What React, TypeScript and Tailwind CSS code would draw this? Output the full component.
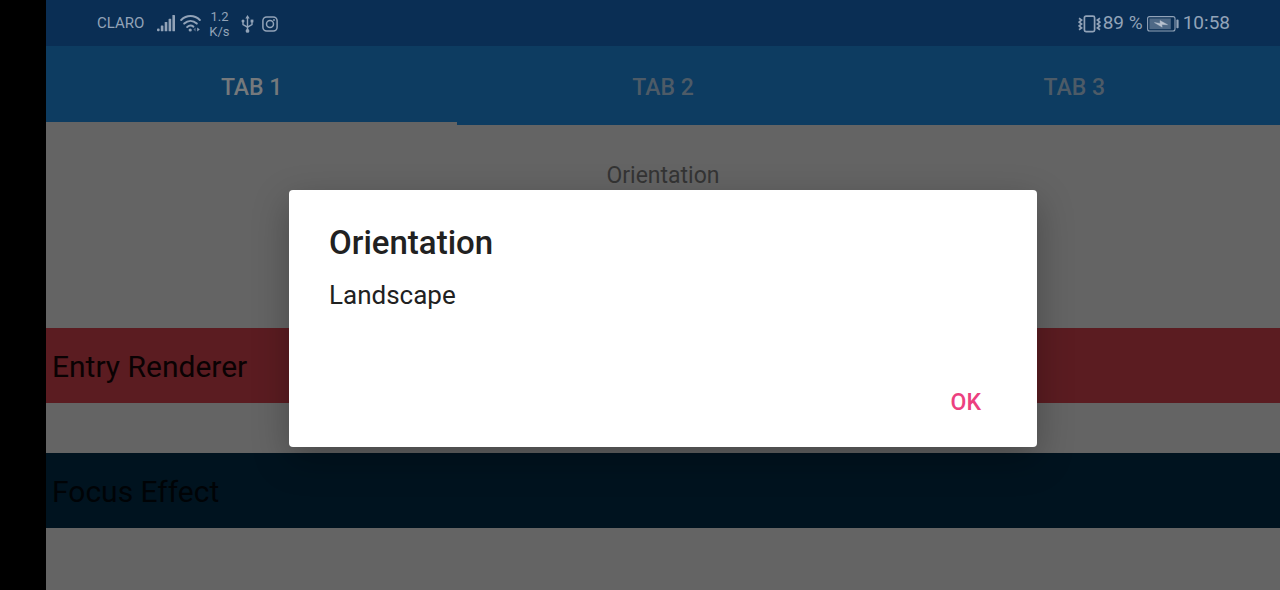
import React, { useState } from "react";

function SignalIcon() {
  return (
    <svg width="18" height="17" viewBox="0 0 18 17" fill="currentColor" aria-hidden="true">
      <rect x="0" y="13.5" width="2.6" height="2.8" rx="1" />
      <rect x="3.8" y="10.5" width="2.6" height="5.8" rx="0.6" />
      <rect x="7.7" y="7" width="2.6" height="9.3" rx="0.6" />
      <rect x="11.6" y="3.8" width="2.6" height="12.5" rx="0.6" />
      <rect x="15.4" y="0" width="2.6" height="16.3" rx="0.6" />
    </svg>
  );
}

function WifiIcon() {
  return (
    <svg width="21" height="17" viewBox="0 0 21 17" fill="none" stroke="currentColor" strokeWidth="2" strokeLinecap="round" aria-hidden="true">
      <path d="M1.2 5C6.6 -0.2 14.4 -0.2 19.8 5" />
      <path d="M4.2 8.6C8 5.1 13 5.1 16.8 8.6" />
      <path d="M7.2 12C9.2 10.3 11.6 10.3 13.4 11.6" />
      <circle cx="10.2" cy="15" r="1.6" fill="currentColor" stroke="none" />
      <path d="M15.6 12.4L13.4 14.4L15.6 16.4Z" fill="currentColor" stroke="none" opacity="0.55" />
      <path d="M17.2 12.4L19.8 14.4L17.2 16.4Z" fill="currentColor" stroke="none" />
    </svg>
  );
}

function UsbIcon() {
  return (
    <svg width="13" height="18" viewBox="0 0 13 18" fill="none" stroke="currentColor" strokeWidth="1.4" aria-hidden="true">
      <path d="M6.5 2.5V15.5" />
      <path d="M2 6.5V9.6L6.5 12.2L11 9.6V6.5" />
      <path d="M6.5 0L8.7 3.4H4.3Z" fill="currentColor" stroke="none" />
      <circle cx="6.5" cy="15.9" r="1.9" fill="currentColor" stroke="none" />
      <circle cx="2" cy="6" r="1.5" fill="currentColor" stroke="none" />
      <rect x="9.6" y="4.6" width="2.8" height="2.8" fill="currentColor" stroke="none" />
    </svg>
  );
}

function CameraIcon() {
  return (
    <svg width="16" height="16" viewBox="0 0 16 16" fill="none" stroke="currentColor" strokeWidth="1.5" aria-hidden="true">
      <rect x="0.9" y="0.9" width="14.2" height="14.2" rx="3.8" />
      <circle cx="8" cy="8" r="3.5" />
      <circle cx="12" cy="4" r="0.9" fill="currentColor" stroke="none" />
    </svg>
  );
}

function VibrateIcon() {
  return (
    <svg width="23" height="18" viewBox="0 0 23 18" fill="none" stroke="currentColor" strokeWidth="1.7" aria-hidden="true">
      <rect x="6.4" y="1.2" width="10.2" height="15.4" rx="1.6" />
      <path d="M1 3.2L3.6 5L1.2 7.1L3.6 9L1.2 10.9L3.6 13L1 14.8" />
      <path d="M22 3.2L19.4 5L21.8 7.1L19.4 9L21.8 10.9L19.4 13L22 14.8" />
    </svg>
  );
}

function BatteryIcon() {
  return (
    <svg width="32" height="16" viewBox="0 0 32 16" aria-hidden="true">
      <rect x="0.6" y="0.6" width="27.4" height="14.4" rx="2" fill="none" stroke="currentColor" strokeWidth="1.1" />
      <rect x="2.4" y="2.4" width="21.4" height="10.8" fill="currentColor" opacity="0.5" />
      <rect x="29.4" y="3.6" width="2.2" height="8.6" rx="0.8" fill="currentColor" />
      <path d="M7.4 6.6L13.2 7.4L13 4.6L20.6 8.7L14.8 8.4L15.2 11.2Z" fill="#b8c2cf" stroke="#b8c2cf" strokeWidth="0.4" />
    </svg>
  );
}

function StatusBar() {
  return (
    <header className="flex h-[46px] items-center bg-[#0a2e54] pt-px pr-[50px] pl-[51px] text-[#92a3b8]">
      <span className="text-[15px]">CLARO</span>
      <div className="ml-[13px] flex items-center gap-[5px]">
        <SignalIcon />
        <WifiIcon />
      </div>
      <div className="ml-2 text-center text-[13px] leading-[15px]">
        <div>1.2</div>
        <div>K/s</div>
      </div>
      <div className="ml-[11px] flex items-center gap-2">
        <UsbIcon />
        <CameraIcon />
      </div>
      <div className="ml-auto flex items-center text-[19px]">
        <VibrateIcon />
        <span className="ml-[2px]">89 %</span>
        <span className="mx-1">
          <BatteryIcon />
        </span>
        <time>10:58</time>
      </div>
    </header>
  );
}

const tabs = ["TAB 1", "TAB 2", "TAB 3"];

function TabBar() {
  const [active, setActive] = useState(0);
  return (
    <nav role="tablist" className="grid h-[79px] grid-cols-3 bg-[#0d3c61]">
      {tabs.map((tab, i) => (
        <button
          key={tab}
          type="button"
          role="tab"
          aria-selected={i === active}
          onClick={() => setActive(i)}
          className={
            i === active
              ? "border-b-3 border-[#646464] pt-2 text-[23px] font-medium text-[#75797c]"
              : "border-b-3 border-transparent pt-2 text-[23px] font-medium text-[#4d5b67]"
          }
        >
          {tab}
        </button>
      ))}
    </nav>
  );
}

export default function App() {
  return (
    <div className="flex min-h-screen bg-black font-[Roboto,sans-serif]">
      <div className="relative ml-[46px] flex flex-1 flex-col bg-[#646464]">
        <StatusBar />
        <TabBar />
        <main className="flex flex-col">
          <p className="pt-[35px] text-center text-[23px] leading-8 text-[#343434]">Orientation</p>
          <div className="mt-[136px] flex flex-col gap-[50px]">
            <input
              aria-label="Entry"
              defaultValue="Entry Renderer"
              className="h-[75px] w-full bg-[#5b1c21] px-1.5 pt-px text-[30px] text-[#0a0203] outline-none"
            />
            <input
              aria-label="Focus"
              defaultValue="Focus Effect"
              className="h-[75px] w-full bg-[#00131f] px-1.5 pt-px text-[30px] text-[#000306] outline-none"
            />
          </div>
        </main>
        <div className="absolute inset-x-0 top-[46px] bottom-0 flex items-center justify-center">
          <section
            role="alertdialog"
            aria-modal="true"
            aria-labelledby="dialog-title"
            className="flex w-[748px] max-w-full flex-col rounded-[4px] bg-white px-10 pt-8 pb-[18px] text-[#212121] shadow-[0_12px_36px_rgba(0,0,0,0.28)]"
          >
            <h2 id="dialog-title" className="text-[33px] leading-[42px] font-medium">
              Orientation
            </h2>
            <p className="mt-[15px] text-[26px] leading-8">Landscape</p>
            <div className="mt-[68px] flex justify-end">
              <button type="button" className="h-[50px] px-4 text-[23px] font-medium text-[#ec407f]">
                OK
              </button>
            </div>
          </section>
        </div>
      </div>
    </div>
  );
}
